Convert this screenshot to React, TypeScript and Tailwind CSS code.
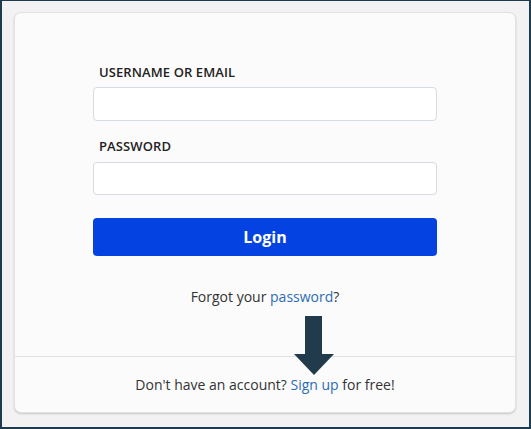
export default function App() {
  return (
    <div className="w-[531px] h-[429px] bg-[#1f3a4c] pt-px pl-[2px] pr-[2px] pb-[2px]" style={{ fontFamily: '"Open Sans", sans-serif' }}>
      <div className="w-full h-full bg-[#f2f2f2] pl-[12px] pt-[11px]">
        <div className="relative w-[502px] h-[401px] bg-[#fbfbfb] rounded-[7px] border border-[#e2e2e2] shadow-[0_1px_2px_rgba(0,0,0,0.18)] flex flex-col">
          <div className="h-[343px] flex flex-col items-center pt-[49px]">
            <div className="w-[344px] flex flex-col">
              <label className="h-[20px] leading-[20px] pl-[6px] text-[13px] font-semibold text-[#222] tracking-[0.1px]">USERNAME OR EMAIL</label>
              <div className="mt-[5px] h-[34px] bg-white border border-[#d6dce1] rounded-[4px]" />
              <label className="mt-[15px] h-[20px] leading-[20px] pl-[6px] text-[13px] font-semibold text-[#222] tracking-[0.1px]">PASSWORD</label>
              <div className="mt-[6px] h-[33px] bg-white border border-[#d6dce1] rounded-[4px]" />
              <button className="mt-[23px] h-[38px] bg-[#0443e2] rounded-[4px] text-white text-[16px] font-bold leading-[38px]">Login</button>
              <div className="mt-[31px] h-[20px] leading-[20px] text-center text-[14px] text-[#333]">
                Forgot your <span className="text-[#2b6cb5]">password</span>?
              </div>
            </div>
          </div>
          <div className="flex-1 border-t border-[#e1e1e1] flex items-center justify-center">
            <div className="text-[14px] leading-[20px] text-[#333]">
              Don't have an account? <span className="text-[#2b6cb5]">Sign up</span> for free!
            </div>
          </div>
          <div className="absolute left-[278px] top-[303px] w-[41px] h-[59px] flex flex-col items-center">
            <div className="w-[17px] h-[38px] bg-[#213b4d]" />
            <div className="w-0 h-0 border-l-[20.5px] border-r-[20.5px] border-t-[21px] border-l-transparent border-r-transparent border-t-[#213b4d]" />
          </div>
        </div>
      </div>
    </div>
  );
}
